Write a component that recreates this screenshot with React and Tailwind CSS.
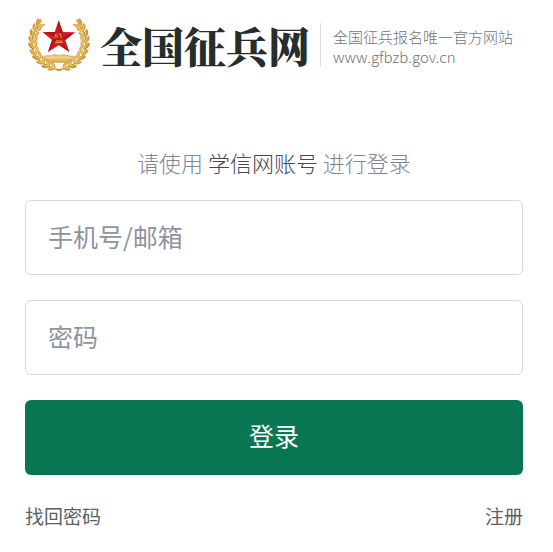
import { useState } from 'react';

const leafAngles = [14, 27, 40, 53, 66, 79, 92, 105, 118, 130];

function Branch() {
    return (
        <g>
            <path
                d="M126 181C98 176 66 163 49 137C33 111 36 72 61 43"
                fill="none"
                stroke="#c08a2a"
                strokeWidth="4"
            />
            {leafAngles.map((angle, i) => {
                const rad = (angle * Math.PI) / 180;
                const x = 120 - 78 * Math.sin(rad);
                const y = 94 + 78 * Math.cos(rad);
                return (
                    <g key={angle} transform={`translate(${x} ${y}) rotate(${angle - 90})`}>
                        <path
                            d="M1 9C-11 7 -17 -4 -13 -14C-4 -10 2 -2 1 9Z"
                            fill={i % 2 ? '#c98f2c' : '#d79f38'}
                        />
                        <path d="M0 9C-2 -2 4 -10 14 -13C15 -3 10 6 0 9Z" fill="#dca745" />
                        <path
                            d="M0 6L-8 -7M2 4L9 -7"
                            fill="none"
                            stroke="#f6dfa0"
                            strokeWidth="2"
                        />
                    </g>
                );
            })}
            <path d="M54 45C50 33 57 27 67 28C70 35 65 43 54 45Z" fill="#d9a541" />
        </g>
    );
}

function Emblem() {
    return (
        <svg
            viewBox="18 24 204 162"
            className="h-[54px] w-[68px] shrink-0"
            role="img"
            aria-label="徽标"
        >
            <Branch />
            <g transform="matrix(-1 0 0 1 240 0)">
                <Branch />
            </g>
            <path
                d="M75 141C84 133 91 140 98 136C109 131 119 139 128 135C139 132 147 140 164 139L157 149H83Z"
                fill="#edcf80"
                stroke="#c79334"
                strokeWidth="2"
            />
            <path d="M80 151H160L151 158H90Z" fill="#d9a947" />
            <path d="M119 31L131 66L168 67L139 90L151 126L120 105L87 126L99 90L71 67L107 66Z" fill="#d11a22" />
            <path
                d="M119 31V84L131 66ZM168 67L119 84L139 90ZM151 126L119 84L120 105ZM87 126L119 84L99 90ZM71 67L119 84L107 66Z"
                fill="#b3141c"
            />
            <path
                d="M110 72Q109 80 106 84M114 73V83M119 72H125V81Q126 84 130 82M111 93H129M107 98H132"
                fill="none"
                stroke="#eaa33d"
                strokeWidth="3"
            />
        </svg>
    );
}

function Header() {
    return (
        <header className="flex items-center">
            <Emblem />
            <h1 className="ml-[7px] shrink-0 whitespace-nowrap font-['Noto_Serif_CJK_SC','Noto_Sans_CJK_SC',serif] text-[42px] leading-[52px] font-black text-[#262d2d]">
                全国征兵网
            </h1>
            <div className="ml-[10px] border-l border-[#dddddd] pt-1 pl-3 whitespace-nowrap text-[#707575]">
                <p className="text-[15px] leading-5 font-light">全国征兵报名唯一官方网站</p>
                <p className="text-[15px] leading-5 font-light">www.gfbzb.gov.cn</p>
            </div>
        </header>
    );
}

const fieldClass =
    'block h-[75px] w-full rounded-md border border-[#d5dade] bg-white px-[22px] pb-1 text-[25px] text-[#4b5563] outline-none placeholder:text-[#8d949f] focus:border-[#087653]';

export default function App() {
    const [account, setAccount] = useState('');
    const [password, setPassword] = useState('');

    return (
        <main className="bg-white pt-[18px] pr-[30px] pb-6 pl-[25px] font-['Noto_Sans_CJK_SC',sans-serif]">
            <Header />
            <p className="mt-[74px] text-center text-[22px] leading-8 font-light text-[#7f8792]">
                请使用 <span className="text-[#44494f]">学信网账号</span> 进行登录
            </p>
            <form className="mt-[22px]" onSubmit={(e) => e.preventDefault()}>
                <div className="space-y-[25px]">
                    <input
                        type="text"
                        aria-label="手机号/邮箱"
                        placeholder="手机号/邮箱"
                        value={account}
                        onChange={(e) => setAccount(e.target.value)}
                        className={fieldClass}
                    />
                    <input
                        type="password"
                        aria-label="密码"
                        placeholder="密码"
                        value={password}
                        onChange={(e) => setPassword(e.target.value)}
                        className={fieldClass}
                    />
                    <button
                        type="submit"
                        className="h-[75px] w-full cursor-pointer rounded-md bg-[#087653] pb-1 text-[25px] text-white"
                    >
                        登录
                    </button>
                </div>
                <div className="mt-[25px] flex justify-between text-[19px] leading-8 text-[#5b6067]">
                    <a href="#recover">找回密码</a>
                    <a href="#register">注册</a>
                </div>
            </form>
        </main>
    );
}
